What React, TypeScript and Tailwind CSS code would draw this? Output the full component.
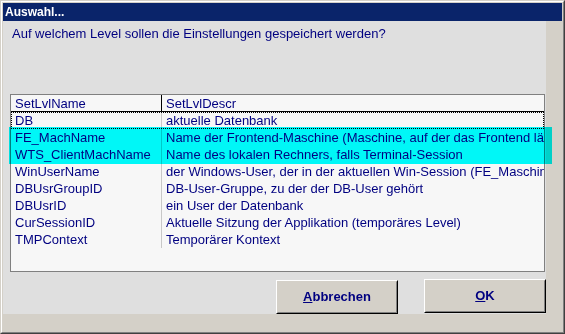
import React from "react";

const rows = [
    { name: "DB", descr: "aktuelle Datenbank" },
    {
        name: "FE_MachName",
        descr: "Name der Frontend-Maschine (Maschine, auf der das Frontend läuft)",
    },
    {
        name: "WTS_ClientMachName",
        descr: "Name des lokalen Rechners, falls Terminal-Session",
    },
    {
        name: "WinUserName",
        descr: "der Windows-User, der in der aktuellen Win-Session (FE_Maschine) angemeldet ist",
    },
    { name: "DBUsrGroupID", descr: "DB-User-Gruppe, zu der der DB-User gehört" },
    { name: "DBUsrID", descr: "ein User der Datenbank" },
    {
        name: "CurSessionID",
        descr: "Aktuelle Sitzung der Applikation (temporäres Level)",
    },
    { name: "TMPContext", descr: "Temporärer Kontext" },
];

function WinButton({ label, rest, className = "" }: { label: string; rest: string; className?: string }) {
    return (
        <button
            className={
                "w-[122px] h-[34px] bg-[#d4d0c8] border border-t-white border-l-white border-r-black border-b-black " +
                className
            }
        >
            <div className="w-full h-full flex items-center justify-center border border-t-[#d4d0c8] border-l-[#d4d0c8] border-r-[#808080] border-b-[#808080] text-[13px] font-bold text-[#000080]">
                <span className="underline">{label}</span>
                {rest}
            </div>
        </button>
    );
}

export default function App() {
    return (
        <div
            className="relative w-[565px] h-[334px] bg-[#d4d0c8] border border-t-[#d4d0c8] border-l-[#d4d0c8] border-r-[#404040] border-b-[#404040]"
            style={{ fontFamily: '"Liberation Sans", Arial, sans-serif' }}
        >
            <div className="h-full flex flex-col p-px border border-t-white border-l-white border-r-[#808080] border-b-[#808080]">
                {/* title bar */}
                <div className="h-[18px] shrink-0 bg-[#0a246a] flex items-center pl-[2px] text-[12px] font-bold text-white leading-none">
                    Auswahl...
                </div>

                <div className="flex">
                    <div className="w-[543px] h-[293px] shrink-0 bg-[#dfdfdf] flex flex-col pl-[7px]">
                        <p className="mt-[5px] pl-[2px] text-[13px] leading-[15px] text-[#000080] whitespace-nowrap">
                            Auf welchem Level sollen die Einstellungen gespeichert werden?
                        </p>

                        {/* list box */}
                        <div className="mt-[53px] w-[535px] h-[179px] border border-[#808080] bg-[#f7f7f7] overflow-hidden text-[13px] text-[#000080]">
                            <div className="flex h-[17px] border-b border-black">
                                <div className="w-[151px] shrink-0 border-r border-black pl-[4px] leading-[16px] pt-px">
                                    SetLvlName
                                </div>
                                <div className="pl-[4px] leading-[16px] pt-px whitespace-nowrap">
                                    SetLvlDescr
                                </div>
                            </div>
                            {rows.map((row, i) => (
                                <div
                                    key={row.name}
                                    className={
                                        "flex h-[17px] " +
                                        (i === 0
                                            ? "outline-1 outline-dotted outline-black -outline-offset-1"
                                            : "")
                                    }
                                >
                                    <div className="w-[151px] shrink-0 border-r border-[#c8c8c8] pl-[4px] leading-[17px] whitespace-nowrap">
                                        {row.name}
                                    </div>
                                    <div className="pl-[4px] leading-[17px] whitespace-nowrap">
                                        {row.descr}
                                    </div>
                                </div>
                            ))}
                        </div>

                        <div className="mt-[7px] flex justify-end items-start gap-[26px]">
                            <WinButton label="A" rest="bbrechen" className="mt-px" />
                            <WinButton label="O" rest="K" />
                        </div>
                    </div>
                    <div className="flex-1" />
                </div>
            </div>

            {/* selection highlight */}
            <div className="absolute left-[8px] top-[126px] w-[543px] h-[37px] bg-[#00ffff] mix-blend-multiply pointer-events-none" />
        </div>
    );
}
